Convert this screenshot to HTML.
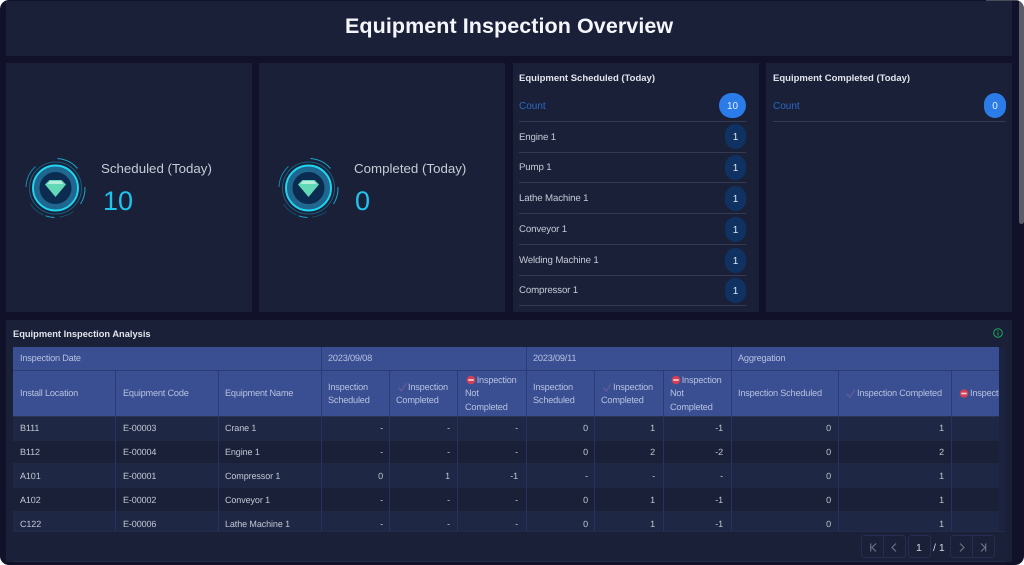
<!DOCTYPE html>
<html><head><meta charset="utf-8">
<style>
html,body{margin:0;padding:0;width:1024px;height:565px;overflow:hidden;background:#fff}
#w{position:absolute;left:0;top:0;width:1024px;height:565px;background:#11122a;border-radius:9px;overflow:hidden;font-family:"Liberation Sans",sans-serif;color:#c5cad6;font-size:10px}
.p{position:absolute;background:#1a2038}
.a{position:absolute;white-space:nowrap}
.r{position:absolute;white-space:nowrap;text-align:right}
.b{position:absolute;left:0;top:0}
.bar{position:absolute}
.hl{position:absolute;height:1px;background:#343a50}
.pill{position:absolute;border-radius:13px;text-align:center;color:#dfe6f2;font-size:10px;line-height:27px;height:25px}
.h{color:#b6c0df;font-size:9.2px;letter-spacing:-.2px;line-height:13.4px;text-rendering:geometricPrecision}
.vl{position:absolute;width:1px;background:#273260}
.c{font-size:9px;letter-spacing:-.1px;color:#c3c8d4;margin-top:1px;text-rendering:geometricPrecision}
.l{font-size:9.7px;letter-spacing:-.15px;line-height:13px;text-rendering:geometricPrecision}
.i{display:inline-block;width:12px}
.j{display:inline-block;width:11.7px}
</style></head><body>
<div id="w">
<div class="p" style="left:6px;top:1px;width:1006px;height:55px"></div>
<div class="a" style="left:345px;top:13px;font-size:21.5px;letter-spacing:.07px;font-weight:bold;color:#f4f6fa;line-height:26px">Equipment Inspection Overview</div>

<div class="p" style="left:6px;top:63px;width:246px;height:249px"></div>
<div class="p" style="left:259px;top:63px;width:246px;height:249px"></div>
<div class="p" style="left:513px;top:63px;width:246px;height:249px"></div>
<div class="p" style="left:766px;top:63px;width:246px;height:249px"></div>
<div class="p" style="left:6px;top:320px;width:1006px;height:242px"></div>

<svg class="b" width="1024" height="565" style="position:absolute">
<defs><g id="g">
<circle r="23" fill="#0b2c50"/>
<circle r="19" fill="#0b2c50" stroke="#20678f" stroke-width="6"/>
<circle r="22.500" fill="none" stroke="#1fd5f2" stroke-width="1.900"/>
<circle r="26" fill="none" stroke="#15607f" stroke-width="1"/>
<path d="M-29.500-1A29.500 29.500 0 0 1-20-21.500" fill="none" stroke="#128ab0" stroke-width="1"/>
<path d="M2-29.500A29.500 29.500 0 0 1 22-19.500" fill="none" stroke="#1da5c9" stroke-width="1"/>
<path d="M29.500-1A29.500 29.500 0 0 1 25 16" fill="none" stroke="#1da5c9" stroke-width="1"/>
<path d="M-10 27.800A29.500 29.500 0 0 0-1 29.500" fill="none" stroke="#1da5c9" stroke-width="1"/>
<path d="M-25 16A29.500 29.500 0 0 0-12 27" fill="none" stroke="#12506c" stroke-width="1"/>
<path d="M4 29A29.500 29.500 0 0 0 18 23.500" fill="none" stroke="#12506c" stroke-width="1"/>
<path d="M-6-8H6L10.500-3.500 0 9-10.500-3.500Z" fill="#62d9b6"/>
<path d="M-5.500-7H5.500L8-4H-8Z" fill="#b5ecdc"/>
</g></defs>
<use href="#g" x="55.500" y="188"/>
<use href="#g" x="308.500" y="188"/>
</svg>

<div class="a" style="left:101px;top:160px;font-size:13.3px;line-height:17px;color:#c7ccd6">Scheduled (Today)</div>
<div class="a" style="left:103px;top:185px;font-size:27px;line-height:32px;color:#1fc4ee">10</div>
<div class="a" style="left:354px;top:160px;font-size:13.3px;line-height:17px;color:#c7ccd6">Completed (Today)</div>
<div class="a" style="left:355px;top:185px;font-size:27px;line-height:32px;color:#1fc4ee">0</div>

<div class="a" style="left:519px;top:71.500px;font-size:9.5px;font-weight:bold;line-height:13px;color:#e2e5ec">Equipment Scheduled (Today)</div>
<div class="a" style="left:519px;top:100px;font-size:10px;line-height:13px;color:#2a69c4">Count</div>
<div class="pill" style="left:719px;top:93px;width:27px;background:#2b7be9;color:#e6effc">10</div>
<div class="hl" style="left:519px;top:121px;width:227px"></div>
<div class="a l" style="left:519px;top:131px">Engine 1</div>
<div class="pill" style="left:725px;top:124px;width:21px;background:#0f3262">1</div>
<div class="hl" style="left:519px;top:152px;width:227px"></div>
<div class="a l" style="left:519px;top:161px">Pump 1</div>
<div class="pill" style="left:725px;top:155px;width:21px;background:#0f3262">1</div>
<div class="hl" style="left:519px;top:182px;width:227px"></div>
<div class="a l" style="left:519px;top:192px">Lathe Machine 1</div>
<div class="pill" style="left:725px;top:186px;width:21px;background:#0f3262">1</div>
<div class="hl" style="left:519px;top:213px;width:227px"></div>
<div class="a l" style="left:519px;top:223px">Conveyor 1</div>
<div class="pill" style="left:725px;top:217px;width:21px;background:#0f3262">1</div>
<div class="hl" style="left:519px;top:244px;width:227px"></div>
<div class="a l" style="left:519px;top:254px">Welding Machine 1</div>
<div class="pill" style="left:725px;top:248px;width:21px;background:#0f3262">1</div>
<div class="hl" style="left:519px;top:275px;width:227px"></div>
<div class="a l" style="left:519px;top:284px">Compressor 1</div>
<div class="pill" style="left:725px;top:278px;width:21px;background:#0f3262">1</div>
<div class="hl" style="left:519px;top:305px;width:227px"></div>

<div class="a" style="left:773px;top:71.500px;font-size:9.5px;font-weight:bold;line-height:13px;color:#e2e5ec">Equipment Completed (Today)</div>
<div class="a" style="left:773px;top:100px;font-size:10px;line-height:13px;color:#2a69c4">Count</div>
<div class="pill" style="left:984px;top:93px;width:22px;background:#2b7be9;color:#e6effc">0</div>
<div class="hl" style="left:773px;top:121px;width:233px"></div>

<div class="a" style="left:13px;top:327.500px;font-size:9.3px;font-weight:bold;line-height:13px;color:#e2e5ec">Equipment Inspection Analysis</div>
<svg class="a" style="left:993px;top:328px" width="10" height="10" viewBox="0 0 10 10"><circle cx="5" cy="5" r="4.300" fill="none" stroke="#1fa85a" stroke-width="1"/><path d="M5 4.300V7.500M5 2.300V3.400" stroke="#1fa85a" stroke-width="1"/></svg>

<!-- table -->
<div class="bar" style="left:13px;top:347px;width:986px;height:69px;background:#3a4f92"></div>
<div class="bar" style="left:13px;top:416px;width:986px;height:25px;background:#1e2744"></div>
<div class="bar" style="left:13px;top:441px;width:986px;height:22px;background:#1a2038"></div>
<div class="bar" style="left:13px;top:463px;width:986px;height:25px;background:#1e2744"></div>
<div class="bar" style="left:13px;top:488px;width:986px;height:23px;background:#1a2038"></div>
<div class="bar" style="left:13px;top:511px;width:986px;height:20px;background:#1e2744"></div>
<div class="bar" style="left:999px;top:347px;width:6px;height:184px;background:#1c2340"></div>
<div class="bar" style="left:13px;top:370px;width:986px;height:1px;background:#2b3b73"></div>
<div class="bar" style="left:13px;top:531px;width:992px;height:1px;background:#232b4a"></div>
<div class="bar" style="left:13px;top:561px;width:992px;height:1px;background:#232b4a"></div>
<div class="bar" style="left:13px;top:416px;width:986px;height:1px;background:#2b3558"></div>

<div class="vl" style="left:321px;top:347px;height:69px;background:#2b3b73"></div>
<div class="vl" style="left:526px;top:347px;height:69px;background:#2b3b73"></div>
<div class="vl" style="left:731px;top:347px;height:69px;background:#2b3b73"></div>
<div class="vl" style="left:115px;top:371px;height:45px;background:#2b3b73"></div>
<div class="vl" style="left:218px;top:371px;height:45px;background:#2b3b73"></div>
<div class="vl" style="left:389px;top:371px;height:45px;background:#2b3b73"></div>
<div class="vl" style="left:457px;top:371px;height:45px;background:#2b3b73"></div>
<div class="vl" style="left:594px;top:371px;height:45px;background:#2b3b73"></div>
<div class="vl" style="left:663px;top:371px;height:45px;background:#2b3b73"></div>
<div class="vl" style="left:838px;top:371px;height:45px;background:#2b3b73"></div>
<div class="vl" style="left:951px;top:371px;height:45px;background:#2b3b73"></div>
<div class="vl" style="left:115px;top:416px;height:115px"></div>
<div class="vl" style="left:218px;top:416px;height:115px"></div>
<div class="vl" style="left:321px;top:416px;height:115px"></div>
<div class="vl" style="left:389px;top:416px;height:115px"></div>
<div class="vl" style="left:457px;top:416px;height:115px"></div>
<div class="vl" style="left:526px;top:416px;height:115px"></div>
<div class="vl" style="left:594px;top:416px;height:115px"></div>
<div class="vl" style="left:663px;top:416px;height:115px"></div>
<div class="vl" style="left:731px;top:416px;height:115px"></div>
<div class="vl" style="left:838px;top:416px;height:115px"></div>
<div class="vl" style="left:951px;top:416px;height:115px"></div>

<div class="a h" style="left:20px;top:352px">Inspection Date</div>
<div class="a h" style="left:328px;top:352px">2023/09/08</div>
<div class="a h" style="left:533px;top:352px">2023/09/11</div>
<div class="a h" style="left:738px;top:352px">Aggregation</div>
<div class="a h" style="left:20px;top:387px">Install Location</div>
<div class="a h" style="left:123px;top:387px">Equipment Code</div>
<div class="a h" style="left:225px;top:387px">Equipment Name</div>

<div class="a h" style="left:328px;top:381px">Inspection<br>Scheduled</div>
<div class="a h" style="left:396px;top:381px"><span class="i"></span>Inspection<br>Completed</div>
<div class="a h" style="left:465px;top:374px"><span class="j"></span>Inspection<br>Not<br>Completed</div>
<div class="a h" style="left:533px;top:381px">Inspection<br>Scheduled</div>
<div class="a h" style="left:601px;top:381px"><span class="i"></span>Inspection<br>Completed</div>
<div class="a h" style="left:670px;top:374px"><span class="j"></span>Inspection<br>Not<br>Completed</div>
<div class="a h" style="left:738px;top:387px">Inspection Scheduled</div>
<div class="a h" style="left:857px;top:387px">Inspection Completed</div>
<div class="a h" style="left:970px;top:387px;width:29px;overflow:hidden">Inspection</div>

<svg class="a" style="left:0;top:0" width="1024" height="565">
<defs>
<path id="ck" d="M0 4.500L2.800 8L8 0" fill="none" stroke="#5a5a9a" stroke-width="1.600"/>
<g id="no"><circle cx="4" cy="4" r="4.300" fill="#d23f55"/><rect x="1.300" y="3.200" width="5.400" height="1.600" fill="#f0d8dc"/></g>
</defs>
<use href="#ck" x="398.500" y="383"/><use href="#ck" x="603.500" y="383"/><use href="#ck" x="847" y="389.500"/>
<use href="#no" x="467" y="376"/><use href="#no" x="672" y="376"/><use href="#no" x="960" y="389.500"/>
</svg>

<div class="a c" style="left:20px;top:422px">B111</div><div class="a c" style="left:123px;top:422px">E-00003</div><div class="a c" style="left:225px;top:422px">Crane 1</div>
<div class="a c" style="left:20px;top:446px">B112</div><div class="a c" style="left:123px;top:446px">E-00004</div><div class="a c" style="left:225px;top:446px">Engine 1</div>
<div class="a c" style="left:20px;top:470px">A101</div><div class="a c" style="left:123px;top:470px">E-00001</div><div class="a c" style="left:225px;top:470px">Compressor 1</div>
<div class="a c" style="left:20px;top:494px">A102</div><div class="a c" style="left:123px;top:494px">E-00002</div><div class="a c" style="left:225px;top:494px">Conveyor 1</div>
<div class="a c" style="left:20px;top:518px">C122</div><div class="a c" style="left:123px;top:518px">E-00006</div><div class="a c" style="left:225px;top:518px">Lathe Machine 1</div>

<div class="r c" style="right:641px;top:422px">-</div><div class="r c" style="right:574px;top:422px">-</div><div class="r c" style="right:506px;top:422px">-</div><div class="r c" style="right:436px;top:422px">0</div><div class="r c" style="right:369px;top:422px">1</div><div class="r c" style="right:301px;top:422px">-1</div><div class="r c" style="right:193px;top:422px">0</div><div class="r c" style="right:80px;top:422px">1</div>
<div class="r c" style="right:641px;top:446px">-</div><div class="r c" style="right:574px;top:446px">-</div><div class="r c" style="right:506px;top:446px">-</div><div class="r c" style="right:436px;top:446px">0</div><div class="r c" style="right:369px;top:446px">2</div><div class="r c" style="right:301px;top:446px">-2</div><div class="r c" style="right:193px;top:446px">0</div><div class="r c" style="right:80px;top:446px">2</div>
<div class="r c" style="right:641px;top:470px">0</div><div class="r c" style="right:574px;top:470px">1</div><div class="r c" style="right:506px;top:470px">-1</div><div class="r c" style="right:436px;top:470px">-</div><div class="r c" style="right:369px;top:470px">-</div><div class="r c" style="right:301px;top:470px">-</div><div class="r c" style="right:193px;top:470px">0</div><div class="r c" style="right:80px;top:470px">1</div>
<div class="r c" style="right:641px;top:494px">-</div><div class="r c" style="right:574px;top:494px">-</div><div class="r c" style="right:506px;top:494px">-</div><div class="r c" style="right:436px;top:494px">0</div><div class="r c" style="right:369px;top:494px">1</div><div class="r c" style="right:301px;top:494px">-1</div><div class="r c" style="right:193px;top:494px">0</div><div class="r c" style="right:80px;top:494px">1</div>
<div class="r c" style="right:641px;top:518px">-</div><div class="r c" style="right:574px;top:518px">-</div><div class="r c" style="right:506px;top:518px">-</div><div class="r c" style="right:436px;top:518px">0</div><div class="r c" style="right:369px;top:518px">1</div><div class="r c" style="right:301px;top:518px">-1</div><div class="r c" style="right:193px;top:518px">0</div><div class="r c" style="right:80px;top:518px">1</div>

<!-- pager -->
<svg class="a" style="left:0;top:0" width="1024" height="565" fill="none">
<g stroke="#252e50" stroke-width="1">
<rect x="861.500" y="535.500" width="44" height="22" rx="3"/><path d="M883.500 535.500V557.500"/>
<rect x="908.500" y="535.500" width="22" height="22" rx="3"/>
<rect x="950.500" y="535.500" width="44" height="22" rx="3"/><path d="M972.500 535.500V557.500"/>
</g>
<g stroke="#6a7288" stroke-width="1.200">
<path d="M870.700 543.500V551.500M876 543.500L872 547.500L876 551.500"/>
<path d="M896 543.500L892 547.500L896 551.500"/>
<path d="M960 543.500L964 547.500L960 551.500"/>
<path d="M981 543.500L985 547.500L981 551.500M985.700 543.500V551.500"/>
</g>
</svg>
<div class="a" style="left:916px;top:542px;font-size:10.500px;line-height:12px;color:#d5d9e2">1</div>
<div class="a" style="left:933px;top:542px;font-size:10.500px;line-height:12px;color:#d5d9e2">/ 1</div>

<!-- scrollbar -->
<div class="bar" style="left:1019px;top:0;width:5px;height:224px;background:#5a5c68;border-radius:0 0 3px 3px"></div>
<div class="bar" style="left:986px;top:0;width:38px;height:1px;background:#4a4b58"></div>
</div>
</body></html>
